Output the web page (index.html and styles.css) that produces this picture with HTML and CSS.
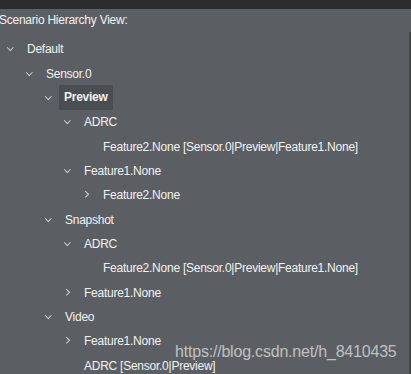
FILE: index.html
```html
<!DOCTYPE html>
<html lang="en">
  <head>
    <meta charset="UTF-8" />
    <title>Scenario Hierarchy View</title>
    <link rel="stylesheet" href="styles.css">
  </head>
  <body>
    <div class="topbar"></div>

    <div class="panel">
      <div class="title">Scenario Hierarchy View:</div>

      <ul class="tree">
        <li>
          <div class="row"><span class="tog down"></span><span class="label">Default</span></div>
          <ul>
            <li>
              <div class="row"><span class="tog down"></span><span class="label">Sensor.0</span></div>
              <ul>
                <li>
                  <div class="row"><span class="tog down"></span><span class="label selected">Preview</span></div>
                  <ul>
                    <li>
                      <div class="row"><span class="tog down"></span><span class="label">ADRC</span></div>
                      <ul>
                        <li><div class="row"><span class="tog"></span><span class="label">Feature2.None [Sensor.0|Preview|Feature1.None]</span></div></li>
                      </ul>
                    </li>
                    <li>
                      <div class="row"><span class="tog down"></span><span class="label">Feature1.None</span></div>
                      <ul>
                        <li><div class="row"><span class="tog right"></span><span class="label">Feature2.None</span></div></li>
                      </ul>
                    </li>
                  </ul>
                </li>
                <li>
                  <div class="row"><span class="tog down"></span><span class="label">Snapshot</span></div>
                  <ul>
                    <li>
                      <div class="row"><span class="tog down"></span><span class="label">ADRC</span></div>
                      <ul>
                        <li><div class="row"><span class="tog"></span><span class="label">Feature2.None [Sensor.0|Preview|Feature1.None]</span></div></li>
                      </ul>
                    </li>
                    <li><div class="row"><span class="tog right"></span><span class="label">Feature1.None</span></div></li>
                  </ul>
                </li>
                <li>
                  <div class="row"><span class="tog down"></span><span class="label">Video</span></div>
                  <ul>
                    <li><div class="row"><span class="tog right"></span><span class="label">Feature1.None</span></div></li>
                    <li><div class="row"><span class="tog"></span><span class="label">ADRC [Sensor.0|Preview]</span></div></li>
                  </ul>
                </li>
              </ul>
            </li>
          </ul>
        </li>
      </ul>

      <div class="scroll-edge"></div>
      <div class="watermark">https://blog.csdn.net/h_8410435</div>
    </div>
  </body>
</html>
```

FILE: styles.css
```css
body {
  margin: 0;
  width: 411px;
  height: 374px;
  overflow: hidden;
  background: #5b5f63;
  font-family: 'Liberation Sans', Arial, sans-serif;
  font-size: 12px;
  letter-spacing: -0.25px;
  color: #f2f2f2;
}

.topbar {
  height: 9px;
  background: #2a2c2f;
}

.panel {
  position: relative;
  height: 365px;
}

.title {
  height: 20px;
  line-height: 20px;
  padding-top: 1px;
  margin-left: -1px;
}

.tree,
.tree ul {
  list-style: none;
  margin: 0;
  padding: 0;
}

.tree {
  padding-top: 7px;
}

.tree ul {
  padding-left: 19px;
}

.row {
  display: flex;
  align-items: center;
  height: 24.35px;
  padding-left: 3px;
}

.tog {
  width: 16px;
  height: 16px;
  flex: none;
  position: relative;
}

.tog.down::before,
.tog.right::before {
  content: '';
  position: absolute;
  width: 3.5px;
  height: 3.5px;
  border-right: 1.6px solid #cfcfcf;
  border-bottom: 1.6px solid #cfcfcf;
}

.tog.down::before {
  left: 5px;
  top: 4px;
  transform: rotate(45deg);
}

.tog.right::before {
  left: 4px;
  top: 5px;
  transform: rotate(-45deg);
}

.label {
  margin-left: 8px;
  white-space: nowrap;
}

.label.selected {
  margin-left: 2px;
  padding: 0 5px;
  line-height: 25px;
  font-weight: bold;
  background: #4a4d51;
}

.scroll-edge {
  position: absolute;
  right: 0;
  top: 23px;
  bottom: 0;
  width: 2px;
  background: #44474a;
}

.watermark {
  position: absolute;
  left: 175px;
  top: 334px;
  font-size: 16px;
  letter-spacing: -0.2px;
  color: rgba(225, 225, 225, 0.75);
  white-space: nowrap;
}
```
